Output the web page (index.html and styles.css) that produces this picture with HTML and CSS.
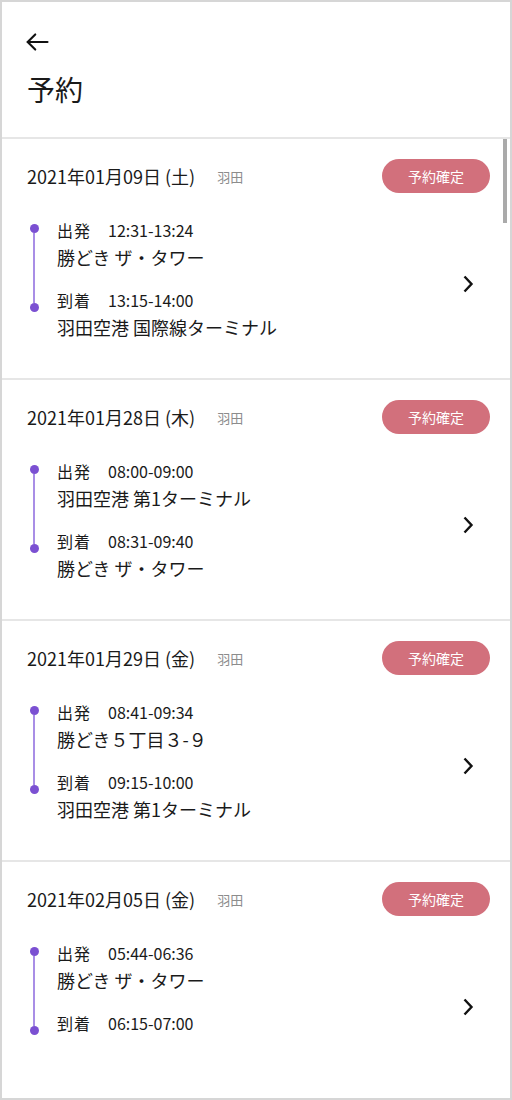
FILE: index.html
```html
<!DOCTYPE html>
<html lang="ja">

<head>
    <meta charset="UTF-8">
    <meta name="viewport" content="width=device-width, initial-scale=1.0">
    <title>予約</title>
    <link rel="stylesheet" href="styles.css">
</head>

<body>

    <div class="phone">
        <header class="header">
            <button class="back" type="button" aria-label="戻る">
                <svg width="28" height="28" viewBox="0 0 24 24" fill="none" stroke="#111" stroke-width="1.8"
                    stroke-linecap="round" stroke-linejoin="round">
                    <path d="M21 12H4" />
                    <path d="M10.5 5.5L4 12l6.5 6.5" />
                </svg>
            </button>
            <h1>予約</h1>
        </header>

        <!-- reservation list -->
        <div class="list">
            <div class="card">
                <div class="card-top">
                    <span class="date">2021年01月09日 (土)</span>
                    <span class="area">羽田</span>
                    <span class="status">予約確定</span>
                </div>
                <div class="card-body">
                    <div class="route">
                        <div class="track"><span class="dot"></span><span class="line"></span><span class="dot"></span></div>
                        <p class="time"><span class="label">出発</span>12:31-13:24</p>
                        <p class="place">勝どき ザ・タワー</p>
                        <p class="time"><span class="label">到着</span>13:15-14:00</p>
                        <p class="place">羽田空港 国際線ターミナル</p>
                    </div>
                    <span class="chevron"><svg width="14" height="20" viewBox="0 0 14 20" fill="none" stroke="#111"
                            stroke-width="2.4"><path d="M3.5 2.5l7 7.5-7 7.5" /></svg></span>
                </div>
            </div>

            <div class="card">
                <div class="card-top">
                    <span class="date">2021年01月28日 (木)</span>
                    <span class="area">羽田</span>
                    <span class="status">予約確定</span>
                </div>
                <div class="card-body">
                    <div class="route">
                        <div class="track"><span class="dot"></span><span class="line"></span><span class="dot"></span></div>
                        <p class="time"><span class="label">出発</span>08:00-09:00</p>
                        <p class="place">羽田空港 第1ターミナル</p>
                        <p class="time"><span class="label">到着</span>08:31-09:40</p>
                        <p class="place">勝どき ザ・タワー</p>
                    </div>
                    <span class="chevron"><svg width="14" height="20" viewBox="0 0 14 20" fill="none" stroke="#111"
                            stroke-width="2.4"><path d="M3.5 2.5l7 7.5-7 7.5" /></svg></span>
                </div>
            </div>

            <div class="card">
                <div class="card-top">
                    <span class="date">2021年01月29日 (金)</span>
                    <span class="area">羽田</span>
                    <span class="status">予約確定</span>
                </div>
                <div class="card-body">
                    <div class="route">
                        <div class="track"><span class="dot"></span><span class="line"></span><span class="dot"></span></div>
                        <p class="time"><span class="label">出発</span>08:41-09:34</p>
                        <p class="place">勝どき５丁目３-９</p>
                        <p class="time"><span class="label">到着</span>09:15-10:00</p>
                        <p class="place">羽田空港 第1ターミナル</p>
                    </div>
                    <span class="chevron"><svg width="14" height="20" viewBox="0 0 14 20" fill="none" stroke="#111"
                            stroke-width="2.4"><path d="M3.5 2.5l7 7.5-7 7.5" /></svg></span>
                </div>
            </div>

            <div class="card">
                <div class="card-top">
                    <span class="date">2021年02月05日 (金)</span>
                    <span class="area">羽田</span>
                    <span class="status">予約確定</span>
                </div>
                <div class="card-body">
                    <div class="route">
                        <div class="track"><span class="dot"></span><span class="line"></span><span class="dot"></span></div>
                        <p class="time"><span class="label">出発</span>05:44-06:36</p>
                        <p class="place">勝どき ザ・タワー</p>
                        <p class="time"><span class="label">到着</span>06:15-07:00</p>
                        <p class="place"></p>
                    </div>
                    <span class="chevron"><svg width="14" height="20" viewBox="0 0 14 20" fill="none" stroke="#111"
                            stroke-width="2.4"><path d="M3.5 2.5l7 7.5-7 7.5" /></svg></span>
                </div>
            </div>
        </div>

        <div class="scroll-thumb"></div>
    </div>

</body>

</html>
```

FILE: styles.css
```css
/* Basic styling */
* {
    box-sizing: border-box;
}

body {
    margin: 0;
    font-family: "Noto Sans CJK JP", "Noto Sans", sans-serif;
    color: #1a1a1a;
    background: #ffffff;
}

.phone {
    position: relative;
    width: 512px;
    height: 1100px;
    border: 2px solid #d6d6d6;
    overflow: hidden;
    background: #ffffff;
}

.header {
    height: 137px;
    padding: 26px 24px 0 21px;
    border-bottom: 2px solid #e6e6e6;
}

.back {
    display: block;
    padding: 0;
    border: none;
    background: none;
}

h1 {
    margin: 10px 0 0 4px;
    font-size: 28px;
    font-weight: 400;
    line-height: 40px;
}

.card {
    height: 241px;
    padding: 20px 20px 0 25px;
    border-bottom: 2px solid #e6e6e6;
}

.card-top {
    display: flex;
    align-items: center;
    height: 34px;
}

.date {
    font-size: 18px;
}

.area {
    margin-left: 22px;
    font-size: 13px;
    color: #8c8c8c;
}

.status {
    margin-left: auto;
    width: 108px;
    height: 34px;
    border-radius: 17px;
    background: #d2707c;
    color: #ffffff;
    font-size: 14px;
    line-height: 34px;
    text-align: center;
}

.card-body {
    display: flex;
    align-items: center;
    margin-top: 24px;
}

.route {
    display: grid;
    grid-template-columns: 30px auto;
    grid-template-rows: 27px 27px 43px 27px;
    flex: 1;
}

.route p {
    grid-column: 2;
    margin: 0;
    font-size: 18px;
    line-height: 27px;
    white-space: nowrap;
}

.route .time {
    align-self: start;
    font-size: 16px;
}

.route p:nth-of-type(3) {
    align-self: end;
}

.label {
    display: inline-block;
    width: 51px;
    font-size: 16px;
    letter-spacing: 1px;
}

.track {
    grid-column: 1;
    grid-row: 1 / 4;
    display: flex;
    flex-direction: column;
    align-items: center;
    width: 14px;
    padding: 7px 0 2px;
}

.dot {
    width: 9px;
    height: 9px;
    border-radius: 50%;
    background: #7b50d2;
}

.line {
    flex: 1;
    width: 2px;
    background: #a98ee6;
}

.chevron {
    display: flex;
    margin: 10px 15px 0 0;
}

.scroll-thumb {
    position: absolute;
    top: 137px;
    right: 3px;
    width: 4px;
    height: 84px;
    background: #aaaaaa;
}
```
